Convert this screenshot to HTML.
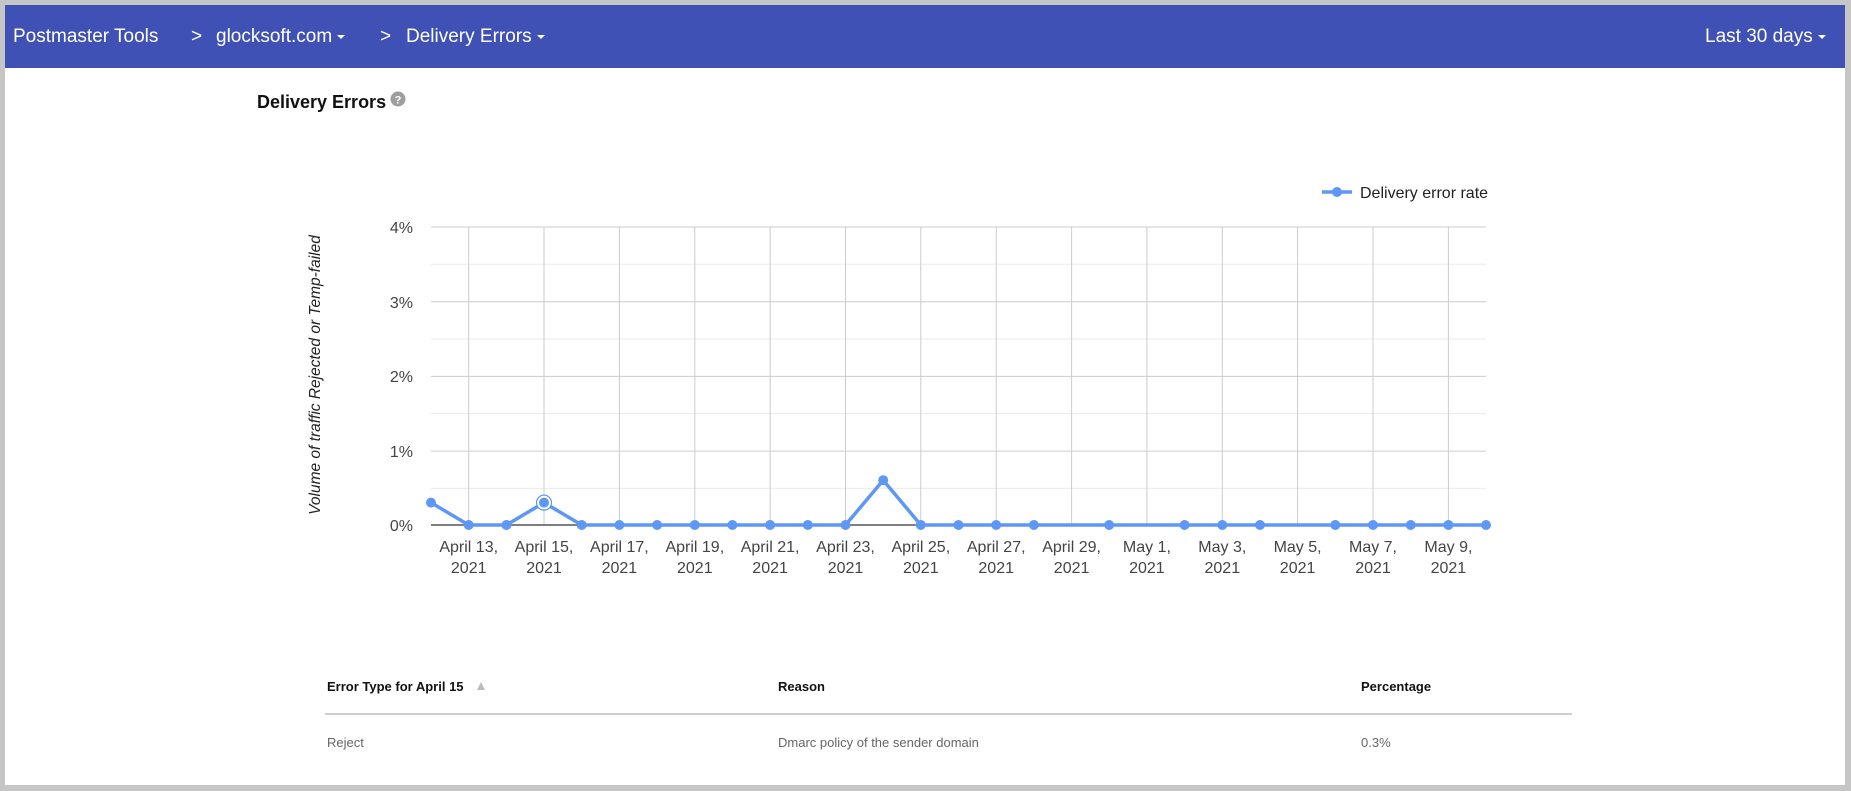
<!DOCTYPE html>
<html><head><meta charset="utf-8"><style>
html,body{margin:0;padding:0;}
body{width:1851px;height:791px;position:relative;background:#c6c6c6;font-family:"Liberation Sans",Arial,sans-serif;overflow:hidden;}
#page{position:absolute;left:5px;top:5px;width:1840px;height:780px;background:#fff;}
#hdr{position:absolute;left:0;top:0;width:1840px;height:63px;background:#3f51b5;color:#fff;font-size:19px;}
#hdr span{position:absolute;top:21px;white-space:nowrap;}
.car{display:inline-block;width:0;height:0;border-left:4px solid transparent;border-right:4px solid transparent;border-top:4px solid #fff;vertical-align:middle;margin-left:5px;}
svg{position:absolute;left:0;top:0;}
</style></head><body>
<div id="page">
<div id="hdr">
<span style="left:8px">Postmaster Tools</span>
<span style="left:186px">&gt;</span>
<span style="left:211px">glocksoft.com<i class="car"></i></span>
<span style="left:375px">&gt;</span>
<span style="left:401px">Delivery Errors<i class="car"></i></span>
<span style="left:1700px">Last 30 days<i class="car"></i></span>
</div>
</div>
<svg width="1851" height="791" viewBox="0 0 1851 791" font-family="Liberation Sans, Arial, sans-serif">
<text x="257" y="108" font-size="18" font-weight="bold" fill="#111">Delivery Errors</text>
<circle cx="398" cy="99" r="7.5" fill="#9e9e9e"/>
<text x="398" y="103.5" font-size="11" font-weight="bold" fill="#fff" text-anchor="middle">?</text>
<line x1="1322" y1="192" x2="1352" y2="192" stroke="#5e97f6" stroke-width="3.5"/>
<circle cx="1337" cy="192" r="5" fill="#5e97f6"/>
<text x="1360" y="198" font-size="16" fill="#222">Delivery error rate</text>
<g stroke="#ebebeb" stroke-width="1">
<line x1="431" y1="264.3" x2="1486" y2="264.3"/><line x1="431" y1="339" x2="1486" y2="339"/><line x1="431" y1="413.7" x2="1486" y2="413.7"/><line x1="431" y1="488.4" x2="1486" y2="488.4"/>
</g>
<g stroke="#cccccc" stroke-width="1">
<line x1="431" y1="227" x2="1486" y2="227"/><line x1="431" y1="301.7" x2="1486" y2="301.7"/><line x1="431" y1="376.4" x2="1486" y2="376.4"/><line x1="431" y1="451.1" x2="1486" y2="451.1"/>
<line x1="468.7" y1="227" x2="468.7" y2="525"/><line x1="544" y1="227" x2="544" y2="525"/><line x1="619.4" y1="227" x2="619.4" y2="525"/><line x1="694.8" y1="227" x2="694.8" y2="525"/><line x1="770.1" y1="227" x2="770.1" y2="525"/><line x1="845.5" y1="227" x2="845.5" y2="525"/><line x1="920.8" y1="227" x2="920.8" y2="525"/><line x1="996.2" y1="227" x2="996.2" y2="525"/><line x1="1071.6" y1="227" x2="1071.6" y2="525"/><line x1="1146.9" y1="227" x2="1146.9" y2="525"/><line x1="1222.3" y1="227" x2="1222.3" y2="525"/><line x1="1297.6" y1="227" x2="1297.6" y2="525"/><line x1="1373" y1="227" x2="1373" y2="525"/><line x1="1448.4" y1="227" x2="1448.4" y2="525"/>
</g>
<line x1="431" y1="525" x2="1486" y2="525" stroke="#333" stroke-width="1.2"/>
<g font-size="16" fill="#444" text-anchor="end">
<text x="413" y="233">4%</text><text x="413" y="308">3%</text><text x="413" y="382">2%</text><text x="413" y="457">1%</text><text x="413" y="531">0%</text>
</g>
<text transform="translate(320,375) rotate(-90)" font-size="15.5" font-style="italic" fill="#222" text-anchor="middle">Volume of traffic Rejected or Temp-failed</text>
<g font-size="16" fill="#444" text-anchor="middle">
<text x="468.7" y="552">April 13,</text><text x="468.7" y="573">2021</text>
<text x="544" y="552">April 15,</text><text x="544" y="573">2021</text>
<text x="619.4" y="552">April 17,</text><text x="619.4" y="573">2021</text>
<text x="694.8" y="552">April 19,</text><text x="694.8" y="573">2021</text>
<text x="770.1" y="552">April 21,</text><text x="770.1" y="573">2021</text>
<text x="845.5" y="552">April 23,</text><text x="845.5" y="573">2021</text>
<text x="920.8" y="552">April 25,</text><text x="920.8" y="573">2021</text>
<text x="996.2" y="552">April 27,</text><text x="996.2" y="573">2021</text>
<text x="1071.6" y="552">April 29,</text><text x="1071.6" y="573">2021</text>
<text x="1146.9" y="552">May 1,</text><text x="1146.9" y="573">2021</text>
<text x="1222.3" y="552">May 3,</text><text x="1222.3" y="573">2021</text>
<text x="1297.6" y="552">May 5,</text><text x="1297.6" y="573">2021</text>
<text x="1373" y="552">May 7,</text><text x="1373" y="573">2021</text>
<text x="1448.4" y="552">May 9,</text><text x="1448.4" y="573">2021</text>
</g>
<polyline fill="none" stroke="#5e97f6" stroke-width="3.5" stroke-linejoin="round" points="431,502.6 468.7,525 506.4,525 544,502.6 581.7,525 845.5,525 883.2,480.2 920.8,525 1486,525"/>
<g fill="#5e97f6">
<circle cx="431" cy="502.6" r="5"/><circle cx="468.7" cy="525" r="5"/><circle cx="506.4" cy="525" r="5"/><circle cx="581.7" cy="525" r="5"/><circle cx="619.4" cy="525" r="5"/><circle cx="657.1" cy="525" r="5"/><circle cx="694.8" cy="525" r="5"/><circle cx="732.4" cy="525" r="5"/><circle cx="770.1" cy="525" r="5"/><circle cx="807.8" cy="525" r="5"/><circle cx="845.5" cy="525" r="5"/><circle cx="883.2" cy="480.2" r="5"/><circle cx="920.8" cy="525" r="5"/><circle cx="958.5" cy="525" r="5"/><circle cx="996.2" cy="525" r="5"/><circle cx="1033.9" cy="525" r="5"/><circle cx="1109.2" cy="525" r="5"/><circle cx="1184.6" cy="525" r="5"/><circle cx="1222.3" cy="525" r="5"/><circle cx="1260" cy="525" r="5"/><circle cx="1335.3" cy="525" r="5"/><circle cx="1373" cy="525" r="5"/><circle cx="1410.7" cy="525" r="5"/><circle cx="1448.4" cy="525" r="5"/><circle cx="1486" cy="525" r="5"/>
</g>
<circle cx="544" cy="502.6" r="7.5" fill="#fff" stroke="#5e97f6" stroke-width="1.2"/>
<circle cx="544" cy="502.6" r="5" fill="#5e97f6"/>
<g font-size="13" fill="#111" font-weight="bold">
<text x="327" y="691">Error Type for April 15</text><text x="778" y="691">Reason</text><text x="1361" y="691">Percentage</text>
</g>
<path d="M477 690 L481 682 L485 690 Z" fill="#bbb"/>
<line x1="325" y1="714" x2="1572" y2="714" stroke="#bdbdbd" stroke-width="1.5"/>
<g font-size="13" fill="#666">
<text x="327" y="747">Reject</text><text x="778" y="747">Dmarc policy of the sender domain</text><text x="1361" y="747">0.3%</text>
</g>
</svg>
</body></html>
